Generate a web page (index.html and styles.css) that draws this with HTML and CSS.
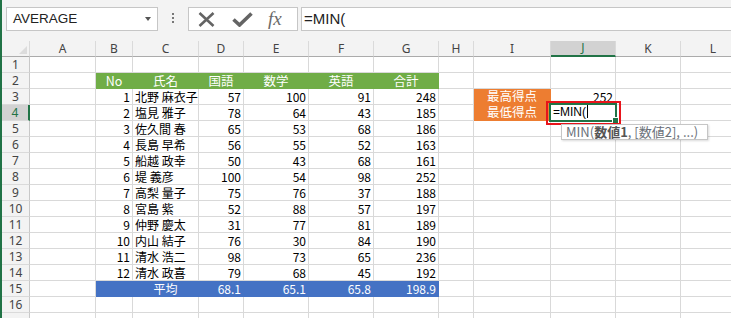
FILE: index.html
```html
<!DOCTYPE html>
<html lang="ja">
<head>
    <meta charset="UTF-8">
    <title>MIN関数</title>
    <link rel="stylesheet" href="styles.css">
</head>
<body>
<div class="app">

<!-- formula bar -->
<div class="fbar">
    <div class="namebox"><span>AVERAGE</span><i class="caret"></i></div>
    <div class="grip"><i></i><i></i><i></i></div>
    <div class="fbtns">
        <svg class="ico-x" width="17" height="15" viewBox="0 0 17 15"><path d="M1.5 1 L15.5 14 M15.5 1 L1.5 14" stroke="#646464" stroke-width="2.6" fill="none"/></svg>
        <svg class="ico-ok" width="21" height="15" viewBox="0 0 21 15"><path d="M1.5 7.5 L7.5 13 L19.5 1.5" stroke="#646464" stroke-width="3.6" fill="none"/></svg>
        <span class="fx">fx</span>
    </div>
    <div class="finput">=MIN(</div>
</div>

<!-- sheet -->
<div class="sheet">
    <div class="row hdr"><span class="corner"><i></i></span><span>A</span><span>B</span><span>C</span><span>D</span><span>E</span><span>F</span><span>G</span><span>H</span><span>I</span><span class="sel">J</span><span>K</span><span>L</span></div>
    <div class="row"><span class="rh">1</span><span></span><span></span><span></span><span></span><span></span><span></span><span></span><span></span><span></span><span></span><span></span><span></span></div>
    <div class="row"><span class="rh">2</span><span></span><span class="gn">No</span><span class="gn">氏名</span><span class="gn">国語</span><span class="gn">数学</span><span class="gn">英語</span><span class="gn">合計</span><span></span><span></span><span></span><span></span><span></span></div>
    <div class="row"><span class="rh">3</span><span></span><span class="r">1</span><span>北野 麻衣子</span><span class="r">57</span><span class="r">100</span><span class="r">91</span><span class="r">248</span><span></span><span class="or top">最高得点</span><span class="r">252</span><span></span><span></span></div>
    <div class="row"><span class="rh sel">4</span><span></span><span class="r">2</span><span>塩見 雅子</span><span class="r">78</span><span class="r">64</span><span class="r">43</span><span class="r">185</span><span></span><span class="or">最低得点</span><span class="edit">=MIN(<b class="cursor"></b></span><span></span><span></span></div>
    <div class="row"><span class="rh">5</span><span></span><span class="r">3</span><span>佐久間 春</span><span class="r">65</span><span class="r">53</span><span class="r">68</span><span class="r">186</span><span></span><span></span><span></span><span></span><span></span></div>
    <div class="row"><span class="rh">6</span><span></span><span class="r">4</span><span>長島 早希</span><span class="r">56</span><span class="r">55</span><span class="r">52</span><span class="r">163</span><span></span><span></span><span></span><span></span><span></span></div>
    <div class="row"><span class="rh">7</span><span></span><span class="r">5</span><span>船越 政幸</span><span class="r">50</span><span class="r">43</span><span class="r">68</span><span class="r">161</span><span></span><span></span><span></span><span></span><span></span></div>
    <div class="row"><span class="rh">8</span><span></span><span class="r">6</span><span>堤 義彦</span><span class="r">100</span><span class="r">54</span><span class="r">98</span><span class="r">252</span><span></span><span></span><span></span><span></span><span></span></div>
    <div class="row"><span class="rh">9</span><span></span><span class="r">7</span><span>高梨 量子</span><span class="r">75</span><span class="r">76</span><span class="r">37</span><span class="r">188</span><span></span><span></span><span></span><span></span><span></span></div>
    <div class="row"><span class="rh">10</span><span></span><span class="r">8</span><span>宮島 紫</span><span class="r">52</span><span class="r">88</span><span class="r">57</span><span class="r">197</span><span></span><span></span><span></span><span></span><span></span></div>
    <div class="row"><span class="rh">11</span><span></span><span class="r">9</span><span>仲野 慶太</span><span class="r">31</span><span class="r">77</span><span class="r">81</span><span class="r">189</span><span></span><span></span><span></span><span></span><span></span></div>
    <div class="row"><span class="rh">12</span><span></span><span class="r">10</span><span>内山 結子</span><span class="r">76</span><span class="r">30</span><span class="r">84</span><span class="r">190</span><span></span><span></span><span></span><span></span><span></span></div>
    <div class="row"><span class="rh">13</span><span></span><span class="r">11</span><span>清水 浩二</span><span class="r">98</span><span class="r">73</span><span class="r">65</span><span class="r">236</span><span></span><span></span><span></span><span></span><span></span></div>
    <div class="row"><span class="rh">14</span><span></span><span class="r">12</span><span>清水 政喜</span><span class="r">79</span><span class="r">68</span><span class="r">45</span><span class="r">192</span><span></span><span></span><span></span><span></span><span></span></div>
    <div class="row"><span class="rh">15</span><span></span><span class="bl"></span><span class="bl ct">平均</span><span class="bl r">68.1</span><span class="bl r">65.1</span><span class="bl r">65.8</span><span class="bl r">198.9</span><span></span><span></span><span></span><span></span><span></span></div>
    <div class="row"><span class="rh">16</span><span></span><span></span><span></span><span></span><span></span><span></span><span></span><span></span><span></span><span></span><span></span><span></span></div>
    <div class="row"><span class="rh"></span><span></span><span></span><span></span><span></span><span></span><span></span><span></span><span></span><span></span><span></span><span></span><span></span></div>

    <!-- overlays: selection, annotation, function hint -->
    <div class="selbox"><i class="handle"></i></div>
    <div class="mark"></div>
    <div class="hint">MIN(<b>数値1</b>, [数値2], ...)</div>
</div>

</div>
</body>
</html>
```

FILE: styles.css
```css
html, body {
    margin: 0;
    padding: 0;
    overflow: hidden;
    background: #fff;
}
.app {
    border-left: 2px solid #217346;
    height: 318px;
    width: 760px;
    font-family: 'Liberation Sans', Arial, sans-serif;
}

/* formula bar */
.fbar {
    display: flex;
    align-items: flex-start;
    height: 41px;
    box-sizing: border-box;
    padding: 7px 0 0 4px;
    background: #f3f3f3;
}
.namebox {
    position: relative;
    box-sizing: border-box;
    width: 152px;
    height: 24px;
    background: #fff;
    border: 1px solid #c6c6c6;
    font-size: 13.5px;
    line-height: 22px;
    padding-left: 6px;
    color: #222;
}
.caret {
    position: absolute;
    right: 6px;
    top: 9px;
    border-left: 3.5px solid transparent;
    border-right: 3.5px solid transparent;
    border-top: 4px solid #555;
}
.grip {
    display: flex;
    flex-direction: column;
    gap: 2px;
    margin: 6px 14px 0 14px;
}
.grip i {
    display: block;
    width: 2px;
    height: 2px;
    background: #777;
}
.fbtns {
    display: flex;
    align-items: center;
    box-sizing: border-box;
    width: 110px;
    height: 24px;
    background: #fff;
    border: 1px solid #c6c6c6;
}
.ico-x { margin-left: 9px; }
.ico-ok { margin-left: 17px; }
.fx {
    margin-left: 15px;
    font-family: 'Liberation Serif', 'Times New Roman', serif;
    font-style: italic;
    font-size: 19px;
    color: #6a6a6a;
    line-height: 20px;
}
.finput {
    flex: 1;
    margin-left: 3px;
    box-sizing: border-box;
    height: 24px;
    background: #fff;
    border: 1px solid #c6c6c6;
    border-right: none;
    font-size: 15px;
    line-height: 22px;
    padding-left: 2px;
    color: #222;
}

/* sheet grid */
.sheet {
    position: relative;
}
.row {
    display: grid;
    grid-template-columns: 28px 66px 37px 66px 45px 65px 65px 65px 35px 77px 65px 65px 65px;
    height: 16px;
}
.row > span {
    box-sizing: border-box;
    border-right: 1px solid #d9d9d9;
    border-bottom: 1px solid #d9d9d9;
    padding: 0 2px;
    white-space: nowrap;
    font-family: 'Noto Sans CJK JP', sans-serif;
    font-size: 12px;
    line-height: 15px;
    color: #000;
    overflow: visible;
}
.row > span.r { text-align: right; }
.row > span.ct { text-align: center; }

.hdr {
    background: #f3f3f3;
}
.hdr > span {
    text-align: center;
    font-family: 'Noto Sans', sans-serif;
    color: #444;
    border-right-color: #dadada;
    border-bottom-color: #ababab;
}
.hdr > span.sel {
    background: #d2d2d2;
    color: #217346;
    border-bottom: 2px solid #217346;
    line-height: 14px;
}
.corner {
    position: relative;
}
.corner i {
    position: absolute;
    right: 2px;
    bottom: 2px;
    border-left: 8px solid transparent;
    border-bottom: 8px solid #dcdcdc;
}
.row > span.rh {
    background: #f3f3f3;
    text-align: center;
    font-family: 'Noto Sans', sans-serif;
    color: #444;
    border-right-color: #c8c8c8;
    border-bottom-color: #dadada;
    padding: 0;
}
.row > span.rh.sel {
    background: #d2d2d2;
    color: #217346;
    border-right: 2px solid #217346;
}

/* fills */
.row > span.gn {
    background: #70ad47;
    border-color: #70ad47;
    color: #fff;
    text-align: center;
    font-size: 12.5px;
}
.row > span.bl {
    background: #4472c4;
    border-color: #4472c4;
    color: #fff;
}
.row > span.or {
    background: #ed7d31;
    border-color: #ed7d31;
    color: #fff;
    text-align: center;
    font-size: 12.5px;
    line-height: 14px;
}
.row > span.edit {
    font-family: 'Liberation Sans', Arial, sans-serif;
    padding-left: 2px;
}
.cursor {
    display: inline-block;
    width: 1px;
    height: 13px;
    background: #000;
    vertical-align: -2px;
    margin-left: 1px;
}

/* overlays */
.selbox {
    position: absolute;
    left: 547px;
    top: 62px;
    width: 68px;
    height: 19px;
    box-sizing: border-box;
    border: 2px solid #217346;
}
.handle {
    position: absolute;
    right: -4px;
    bottom: -4px;
    width: 5px;
    height: 5px;
    background: #217346;
    border: 1px solid #fff;
}
.mark {
    position: absolute;
    left: 544px;
    top: 60px;
    width: 75px;
    height: 24px;
    box-sizing: border-box;
    border: 2px solid #e8141b;
}
.hint {
    position: absolute;
    left: 559px;
    top: 83px;
    width: 147px;
    height: 16px;
    box-sizing: border-box;
    background: #fff;
    border: 1px solid #c6c6c6;
    box-shadow: 1px 1px 2px rgba(0, 0, 0, 0.15);
    padding-left: 4px;
    font-family: 'Noto Sans CJK JP', sans-serif;
    font-size: 13px;
    line-height: 14px;
    color: #6a7078;
    white-space: nowrap;
}
.hint b {
    color: #555;
}
```
